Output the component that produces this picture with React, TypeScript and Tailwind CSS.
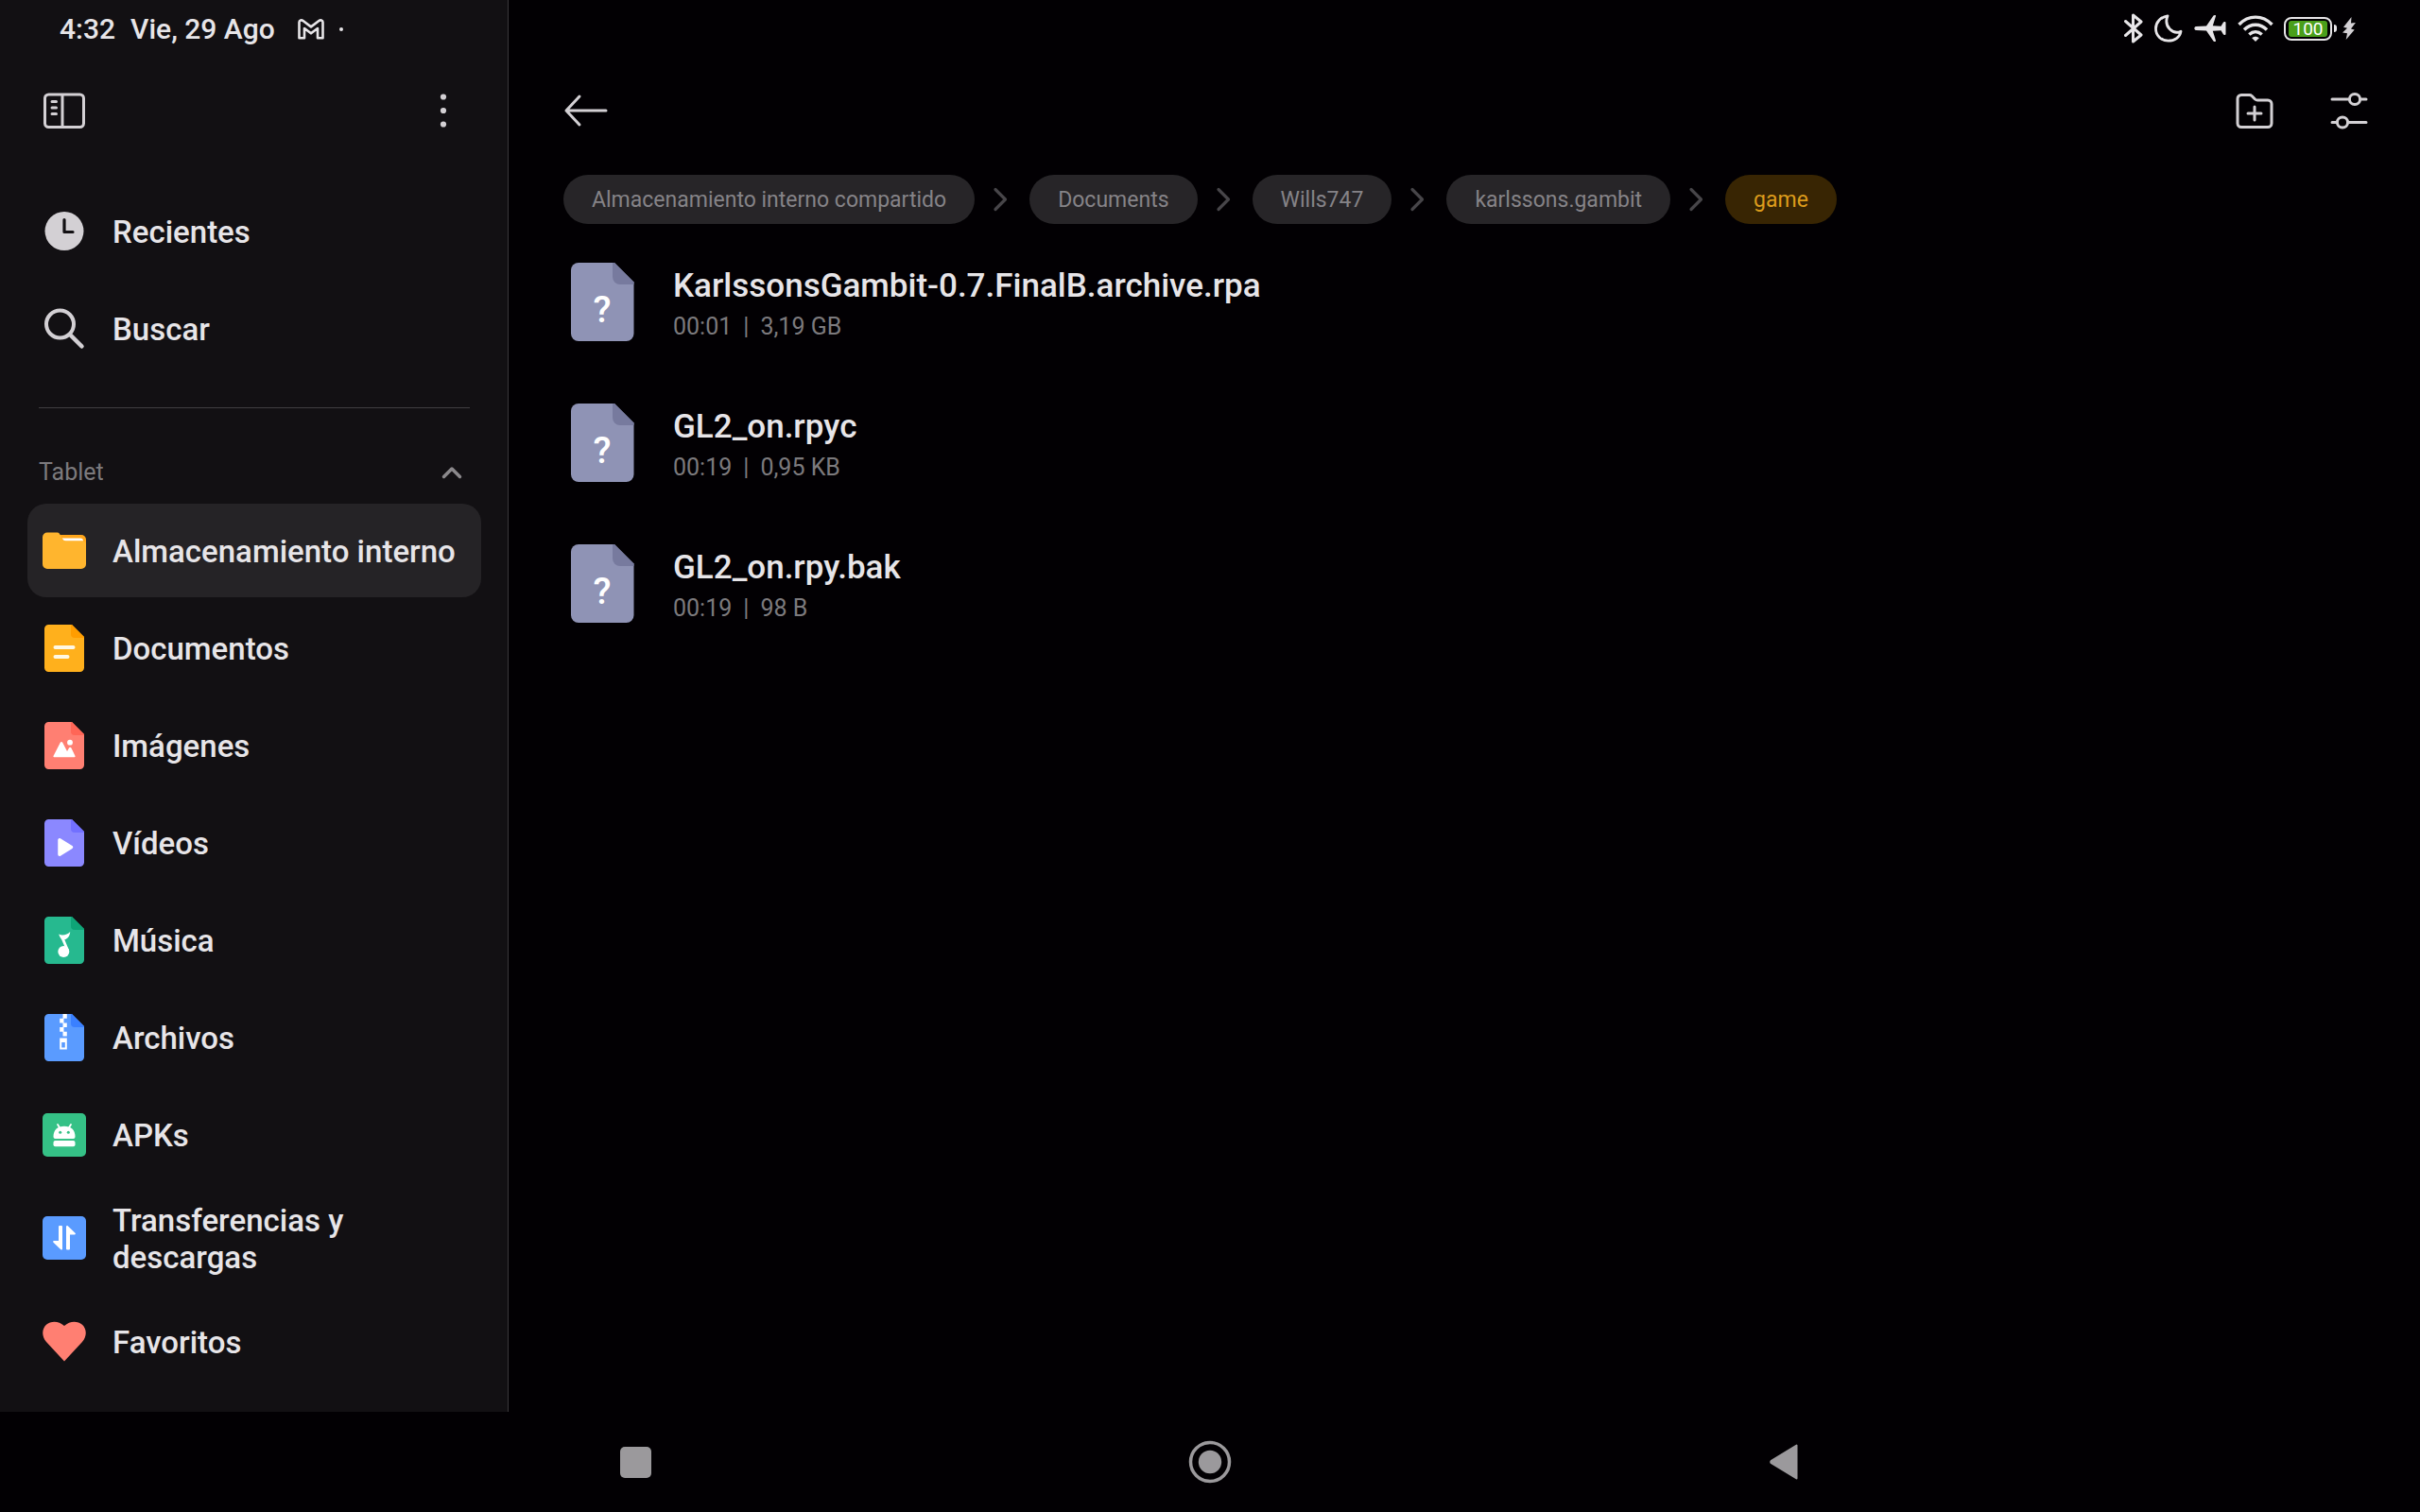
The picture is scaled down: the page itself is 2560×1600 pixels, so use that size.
import type { ReactNode } from 'react';

function Page({ color, fold, children }: { color: string; fold: string; children: ReactNode }) {
  return (
    <svg viewBox="0 0 46 50" className="w-[46px] h-[50px] shrink-0" aria-hidden="true">
      <path d="M6.500 0H31L44 13V45.500a4.500 4.500 0 0 1-4.500 4.500H6.500A4.500 4.500 0 0 1 2 45.500V4.500A4.500 4.500 0 0 1 6.500 0Z" fill={color} />
      <path d="M30 0h1L44 13v1H34a4 4 0 0 1-4-4Z" fill={fold} />
      {children}
    </svg>
  );
}

function Glyph({ children }: { children: ReactNode }) {
  return (
    <svg viewBox="0 0 46 50" className="w-[46px] h-[50px] shrink-0" fill="none" aria-hidden="true">
      {children}
    </svg>
  );
}

const shortcuts = [
  {
    label: 'Recientes',
    icon: (
      <Glyph>
        <circle cx="23" cy="24.500" r="20.500" fill="#d3d0d4" />
        <path d="M23 12.500V25.500H32" stroke="#121013" strokeWidth="3.200" strokeLinecap="round" strokeLinejoin="round" />
      </Glyph>
    ),
  },
  {
    label: 'Buscar',
    icon: (
      <Glyph>
        <circle cx="18.500" cy="20" r="14.500" stroke="#d3d0d4" strokeWidth="4" />
        <path d="M29 31L41.500 43.500" stroke="#d3d0d4" strokeWidth="4.500" strokeLinecap="round" />
      </Glyph>
    ),
  },
];

const folders = [
  {
    label: 'Almacenamiento interno',
    active: true,
    icon: (
      <Glyph>
        <path d="M16 8H41a5 5 0 0 1 5 5V20H16Z" fill="#ffa61c" />
        <path d="M20.500 11.500H40a3 3 0 0 1 3 3H24a4 4 0 0 1-3.500-3Z" fill="#fff" />
        <path d="M5 5.500H15.500a3 3 0 0 1 2.400 1.300L21.500 12.700a4 4 0 0 0 3.200 1.800H42a4 4 0 0 1 4 4V39a5 5 0 0 1-5 5H5a5 5 0 0 1-5-5V10.500a5 5 0 0 1 5-5Z" fill="#ffb52e" />
      </Glyph>
    ),
  },
  {
    label: 'Documentos',
    icon: (
      <Page color="#ffb01c" fold="#ff9d00">
        <path d="M13.500 24H32.500M13.500 34H26.500" stroke="#fff8e4" strokeWidth="4" strokeLinecap="round" />
      </Page>
    ),
  },
  {
    label: 'Imágenes',
    icon: (
      <Page color="#ff7f72" fold="#ff6657">
        <path d="M18.800 21.800a1.400 1.400 0 0 1 2.400 0L26 31l2-3.500a1.400 1.400 0 0 1 2.400 0L34.500 36a.8.8 0 0 1-.7 1.200H12.200a.8.800 0 0 1-.7-1.200Z" fill="#fff" />
        <circle cx="29" cy="21.700" r="2.900" fill="#fff" />
      </Page>
    ),
  },
  {
    label: 'Vídeos',
    icon: (
      <Page color="#8b88ff" fold="#7270ff">
        <path d="M18 21.800V37.200L30.500 29.500Z" fill="#fff" stroke="#fff" strokeWidth="3.500" strokeLinejoin="round" />
      </Page>
    ),
  },
  {
    label: 'Música',
    icon: (
      <Page color="#26b98f" fold="#0ea577">
        <path d="M17.200 18.500C21 20.500 26.500 19 29.200 16C29 20.500 26.500 23.500 23.300 24.300L28 35.500L25.300 36L20.300 24.500C19 22.500 18 21 17.200 18.500Z" fill="#fff" />
        <circle cx="22.300" cy="37" r="6" fill="#fff" />
      </Page>
    ),
  },
  {
    label: 'Archivos',
    icon: (
      <Page color="#5a9bff" fold="#3a80ff">
        <path d="M21.500 0h4.300v4.700h-4.300ZM18.200 4.700h4.300v4.700h-4.300ZM21.500 9.400h4.300v4.700h-4.300ZM18.200 14.100h4.300v4.700h-4.300ZM21.500 18.800h4.300v4.700h-4.300Z" fill="#fff" />
        <path d="M18.200 25.500h7.600v12h-7.600ZM20.200 30v5.500h3.600V30Z" fill="#fff" fillRule="evenodd" />
      </Page>
    ),
  },
  {
    label: 'APKs',
    icon: (
      <Glyph>
        <rect y="2" width="46" height="46" rx="5" fill="#35c186" />
        <path d="M16 14L18.500 18M30 14L27.500 18" stroke="#fff" strokeWidth="1.800" strokeLinecap="round" />
        <path d="M11.500 27C11.500 19.500 16 15.800 23 15.800S34.500 19.500 34.500 27a2 2 0 0 1-2 2H13.500a2 2 0 0 1-2-2Z" fill="#fff" />
        <circle cx="18.700" cy="22.300" r="1.500" fill="#35c186" />
        <circle cx="27.300" cy="22.300" r="1.500" fill="#35c186" />
        <rect x="11.500" y="31" width="23" height="6.200" rx="2" fill="#fff" />
      </Glyph>
    ),
  },
  {
    label: 'Transferencias y descargas',
    icon: (
      <Glyph>
        <rect y="2" width="46" height="46" rx="5" fill="#5a9bff" />
        <path d="M17 13a1 1 0 0 1 1-1h2a1 1 0 0 1 1 1V36.500c0 1-1 1.300-1.700.7L11.500 29.700c-.8-.8-.3-1.700.6-1.700H17Z" fill="#fff" />
        <path d="M29 36.500a1 1 0 0 1-1 1h-2a1 1 0 0 1-1-1V13c0-1 1-1.300 1.700-.7L34.500 19.800c.8.800.3 1.700-.6 1.700H29Z" fill="#fff" />
      </Glyph>
    ),
  },
  {
    label: 'Favoritos',
    icon: (
      <Glyph>
        <path d="M23 45.500L4 25C-1.500 18.500-.5 11 4 6.800C9 2.500 17 2.500 23 8C29 2.500 37 2.500 42 6.800C46.500 11 47.500 18.500 42 25Z" fill="#ff7f72" />
      </Glyph>
    ),
  },
];

const crumbs = ['Almacenamiento interno compartido', 'Documents', 'Wills747', 'karlssons.gambit', 'game'];

const files = [
  { name: 'KarlssonsGambit-0.7.FinalB.archive.rpa', time: '00:01', size: '3,19 GB' },
  { name: 'GL2_on.rpyc', time: '00:19', size: '0,95 KB' },
  { name: 'GL2_on.rpy.bak', time: '00:19', size: '98 B' },
];

function NavItem({ label, icon, active }: { label: string; icon: ReactNode; active?: boolean }) {
  return (
    <a
      href="#"
      className={
        active
          ? 'flex items-center gap-7 min-h-[99px] px-4 py-4 rounded-[20px] bg-[#252326]'
          : 'flex items-center gap-7 min-h-[99px] px-4 py-4 rounded-[20px]'
      }
    >
      {icon}
      <span className="pt-0.5 text-[33px] leading-[39px] font-medium text-[#e7e5e8]">{label}</span>
    </a>
  );
}

function Sidebar() {
  return (
    <aside className="flex flex-col w-[538px] shrink-0 pl-[29px] pr-7 bg-[#121013] border-r border-[#3a383b]">
      <div className="flex items-center h-[60px] pl-[34px] pt-px text-[30px] font-medium text-[#e7e5e8]">
        <span>4:32</span>
        <span className="ml-4">Vie, 29 Ago</span>
        <svg viewBox="0 0 28 22" className="ml-6 w-7 h-[22px]" fill="none" stroke="#e7e5e8" strokeWidth="2.600" strokeLinejoin="round" aria-hidden="true">
          <path d="M1.500 3.500C1.500 1.300 4 .8 5.600 2L14 8.400L22.400 2C24 .8 26.500 1.300 26.500 3.500V20.200H21V10L14 15.300L7 10V20.200H1.500Z" />
        </svg>
        <span className="ml-4 w-1 h-1 rounded-full bg-[#e7e5e8]" />
      </div>

      <div className="flex items-center justify-between h-[114px] pl-4 pr-[34px]">
        <button type="button" aria-label="Panel">
          <svg viewBox="0 0 46 40" className="w-[46px] h-10" fill="none" stroke="#d3d0d4" strokeWidth="3" aria-hidden="true">
            <rect x="2.500" y="3" width="41" height="34.500" rx="4" />
            <path d="M21 3V37.500" />
            <path d="M10 10.500h4.500M10 17h4.500M10 23.500h4.500" strokeLinecap="round" />
          </svg>
        </button>
        <button type="button" aria-label="Más opciones">
          <svg viewBox="0 0 12 40" className="w-3 h-10" fill="#d3d0d4" aria-hidden="true">
            <circle cx="6" cy="5.500" r="3.100" />
            <circle cx="6" cy="20" r="3.100" />
            <circle cx="6" cy="34.500" r="3.100" />
          </svg>
        </button>
      </div>

      <nav className="flex flex-col gap-1 mt-[21px]">
        {shortcuts.map((item) => (
          <NavItem key={item.label} label={item.label} icon={item.icon} />
        ))}
      </nav>

      <hr className="mt-[34px] mb-[35px] mx-3 border-t border-[#403e41]" />

      <div className="flex items-center justify-between h-[66px] pl-3 pr-5 text-[25px] text-[#7c7a7d]">
        <span>Tablet</span>
        <button type="button" aria-label="Contraer">
          <svg viewBox="0 0 22 14" className="w-[22px] h-3.5" fill="none" stroke="#8b898c" strokeWidth="3.500" strokeLinecap="round" strokeLinejoin="round" aria-hidden="true">
            <path d="M2.500 11.500L11 3L19.500 11.500" />
          </svg>
        </button>
      </div>

      <nav className="flex flex-col gap-1">
        {folders.map((item) => (
          <NavItem key={item.label} label={item.label} icon={item.icon} active={item.active} />
        ))}
      </nav>
    </aside>
  );
}

function StatusIcons() {
  return (
    <div className="flex items-center justify-end h-[60px] pr-[68px]">
      <svg viewBox="0 0 20 32" className="w-5 h-8" fill="none" stroke="#e7e5e8" strokeWidth="3" strokeLinejoin="round" strokeLinecap="round" aria-hidden="true">
        <path d="M1.500 8.500L18 23L9.500 30V2L18 9L1.500 23.500" />
      </svg>
      <svg viewBox="0 0 30 30" className="ml-3 w-[30px] h-[30px]" fill="none" stroke="#e7e5e8" strokeWidth="2.800" strokeLinejoin="round" aria-hidden="true">
        <path d="M14 1.800C6.500 3 1.500 8.500 1.500 15.200C1.500 22.500 7.300 28.200 14.500 28.200C21.500 28.200 27 24.500 28 18.200C20 22 9.500 13.500 14 1.800Z" />
      </svg>
      <svg viewBox="0 0 34 30" className="ml-3 w-[34px] h-[30px]" fill="#e7e5e8" aria-hidden="true">
        <path d="M2 13L13 12.500L20.500 1.500C21 .7 23.500.5 23 2L19.800 12.300L28.500 12.700L31 8.500C31.400 7.800 33.500 7.800 33.500 8.700V21.300C33.500 22.200 31.400 22.200 31 21.500L28.500 17.300L19.800 17.700L23 28C23.500 29.500 21 29.300 20.500 28.500L13 17.500L2 17C-.2 16.600-.2 13.400 2 13Z" />
      </svg>
      <svg viewBox="0 0 38 30" className="ml-3 w-[38px] h-[30px]" fill="none" stroke="#e7e5e8" strokeWidth="3.400" aria-hidden="true">
        <path d="M1.500 11C11.500 .5 26.500 .5 36.500 11" />
        <path d="M7 16.500C14 9.500 24 9.500 31 16.500" />
        <path d="M12.300 21.500C16.500 17.700 21.500 17.700 25.700 21.500" />
        <path d="M19 29L15.200 25.300C17.500 23.300 20.500 23.300 22.800 25.300Z" fill="#e7e5e8" stroke="none" />
      </svg>
      <div className="ml-[11px] flex items-center justify-center w-[51px] h-[25px] rounded-lg border-2 border-[#e7e5e8] p-[3px]">
        <span className="flex-1 rounded-[3px] bg-[#4a9f1b] text-center text-[19px] leading-[17px] text-white">100</span>
      </div>
      <span className="ml-0.5 w-[3px] h-2 rounded-r-sm bg-[#e7e5e8]" />
      <svg viewBox="0 0 14 24" className="ml-1.5 w-3.5 h-6" fill="#d3d0d4" aria-hidden="true">
        <path d="M9.500 0L1 10.700L5 11.700L0 16.500L5 17.200L3.700 24L12.700 13.500L9 12.500L13.900 6L9 6.500Z" />
      </svg>
    </div>
  );
}

function FileIcon() {
  return (
    <svg viewBox="0 0 67 83" className="w-[67px] h-[83px] shrink-0" aria-hidden="true">
      <path d="M8 0H46L66.500 20.500V75a8 8 0 0 1-8 8H8a8 8 0 0 1-8-8V8A8 8 0 0 1 8 0Z" fill="#8f93b5" />
      <path d="M44 0h2L66.500 20.500V23H52a8 8 0 0 1-8-8Z" fill="#777a9e" />
      <text x="33" y="63" textAnchor="middle" fontSize="39" fontWeight="500" fill="#fff">?</text>
    </svg>
  );
}

function Browser() {
  return (
    <main className="flex-1 min-w-0">
      <StatusIcons />

      <div className="flex items-center h-[114px] pl-[58px] pr-[55px]">
        <button type="button" aria-label="Atrás">
          <svg viewBox="0 0 48 40" className="w-12 h-10" fill="none" stroke="#d3d0d4" strokeWidth="3" strokeLinecap="round" strokeLinejoin="round" aria-hidden="true">
            <path d="M45 20H3M17 5L3 20L17 35" />
          </svg>
        </button>
        <button type="button" className="ml-auto" aria-label="Nueva carpeta">
          <svg viewBox="0 0 40 40" className="w-10 h-10" fill="none" stroke="#d3d0d4" strokeWidth="3" strokeLinejoin="round" strokeLinecap="round" aria-hidden="true">
            <path d="M6 3.500H14.500a4 4 0 0 1 2.600 1L20.500 8a4 4 0 0 0 2.600 1H34a4 4 0 0 1 4 4V33.500a4 4 0 0 1-4 4H6a4 4 0 0 1-4-4V7.500a4 4 0 0 1 4-4Z" />
            <path d="M20 16V30M13 23H27" />
          </svg>
        </button>
        <button type="button" className="ml-[60px]" aria-label="Ajustes de vista">
          <svg viewBox="0 0 40 40" className="w-10 h-10" fill="none" stroke="#d3d0d4" strokeWidth="3" strokeLinecap="round" aria-hidden="true">
            <path d="M2 8H19.500M32 8H38M2 32.500H6.500M19 32.500H38" />
            <circle cx="26" cy="8" r="5.600" />
            <circle cx="13" cy="32.500" r="5.600" />
          </svg>
        </button>
      </div>

      <nav className="flex items-center mt-[11px] pl-[58px] text-[23px]">
        {crumbs.map((crumb, i) => (
          <div key={crumb} className="flex items-center">
            {i > 0 && (
              <svg viewBox="0 0 16 26" className="ml-[19px] mr-[23px] w-4 h-[26px]" fill="none" stroke="#474549" strokeWidth="3.200" strokeLinecap="round" strokeLinejoin="round" aria-hidden="true">
                <path d="M3 2.500L13.500 13L3 23.500" />
              </svg>
            )}
            <a
              href="#"
              className={
                i === crumbs.length - 1
                  ? 'flex items-center h-[52px] px-[30px] pt-0.5 rounded-full bg-[#382503] text-[#dc9c1c]'
                  : 'flex items-center h-[52px] px-[30px] pt-0.5 rounded-full bg-[#272528] text-[#858387]'
              }
            >
              {crumb}
            </a>
          </div>
        ))}
      </nav>

      <ul className="flex flex-col mt-[41px] pl-[66px] gap-[66px]">
        {files.map((file) => (
          <li key={file.name} className="flex items-center gap-[41px] h-[83px]">
            <FileIcon />
            <div className="pt-1">
              <p className="text-[35px] leading-[42px] font-medium text-[#e7e5e8]">{file.name}</p>
              <p className="flex gap-3 mt-1.5 text-[25px] leading-8 text-[#7c7a7d]">
                <span>{file.time}</span>
                <span>|</span>
                <span>{file.size}</span>
              </p>
            </div>
          </li>
        ))}
      </ul>
    </main>
  );
}

function SystemBar() {
  return (
    <footer className="grid grid-cols-3 place-items-center h-[106px] px-[368px]">
      <button type="button" aria-label="Aplicaciones recientes">
        <span className="block w-[33px] h-[33px] rounded-[5px] bg-[#9b999c]" />
      </button>
      <button type="button" aria-label="Inicio">
        <svg viewBox="0 0 46 46" className="w-[46px] h-[46px]" aria-hidden="true">
          <circle cx="23" cy="23" r="20.500" fill="none" stroke="#9b999c" strokeWidth="3.500" />
          <circle cx="23" cy="23" r="12.200" fill="#9b999c" />
        </svg>
      </button>
      <button type="button" aria-label="Volver">
        <svg viewBox="0 0 32 40" className="w-8 h-10" aria-hidden="true">
          <path d="M28.500 2.500V37.500L1.800 21.200a1.500 1.500 0 0 1 0-2.400Z" fill="#9b999c" stroke="#9b999c" strokeWidth="2" strokeLinejoin="round" />
        </svg>
      </button>
    </footer>
  );
}

export default function App() {
  return (
    <div className="flex flex-col min-h-screen bg-[#020003] font-[Roboto,sans-serif]">
      <div className="flex flex-1">
        <Sidebar />
        <Browser />
      </div>
      <SystemBar />
    </div>
  );
}
